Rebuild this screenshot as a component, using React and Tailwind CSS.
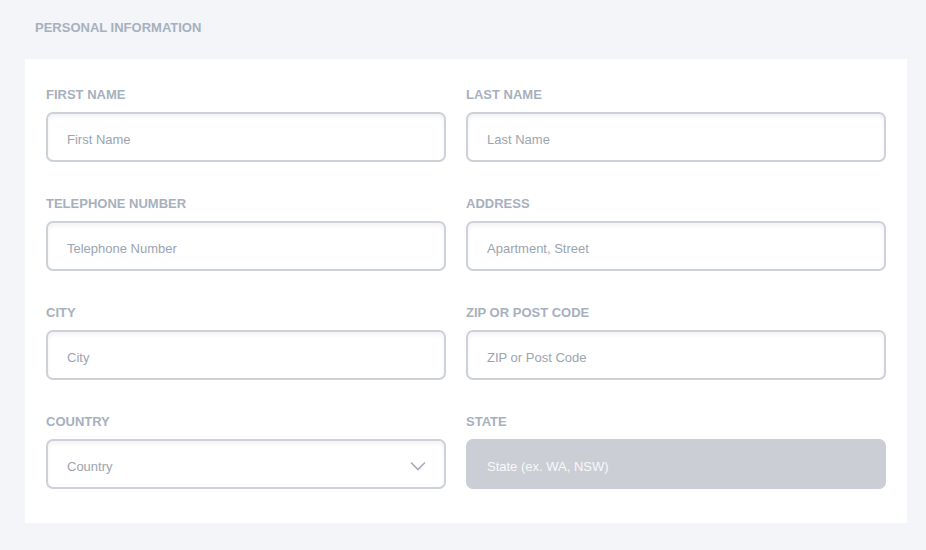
import React from "react";

const fields = [
  { label: "First Name", placeholder: "First Name" },
  { label: "Last Name", placeholder: "Last Name" },
  { label: "Telephone Number", placeholder: "Telephone Number" },
  { label: "Address", placeholder: "Apartment, Street" },
  { label: "City", placeholder: "City" },
  { label: "Zip or Post Code", placeholder: "ZIP or Post Code" },
];

const inputCls =
  "w-full h-[50px] rounded-[7px] border-2 border-[#cdd1d8] bg-white px-[19px] pt-[5px] text-[13px] text-[#4a5568] placeholder:text-[#9ba4b1] shadow-[inset_0_3px_4px_rgba(0,0,0,0.05)] outline-none";

const Label = ({ children }) => (
  <label className="block h-4 mb-[9px] text-[13px] leading-4 font-bold uppercase text-[#a7b0be]">
    {children}
  </label>
);

export default function App() {
  return (
    <div
      className="min-h-[550px] bg-[#f4f5f9] pl-[25px] pr-[19px] pt-[20px] pb-[28px]"
      style={{ fontFamily: '"Liberation Sans", Arial, sans-serif' }}
    >
      <h2 className="pl-[10px] h-4 mb-[23px] text-[13px] leading-4 font-bold uppercase text-[#a7b0be]">
        Personal Information
      </h2>

      <div className="bg-white px-[21px] pt-[28px] pb-[34px]">
        <div className="grid grid-cols-2 gap-y-[34px]">
          {fields.map((f, i) => (
            <div key={f.label} className={i % 2 === 0 ? "pr-5" : ""}>
              <Label>{f.label}</Label>
              <input className={inputCls} placeholder={f.placeholder} />
            </div>
          ))}

          <div className="pr-5">
            <Label>Country</Label>
            <div className="relative">
              <select className={inputCls + " appearance-none text-[#9ba4b1]"} defaultValue="">
                <option value="" disabled>
                  Country
                </option>
              </select>
              <svg
                className="absolute right-[20px] top-[22px] pointer-events-none"
                width="16"
                height="10"
                viewBox="0 0 16 10"
                fill="none"
              >
                <path d="M1 1.5 8 8.5 15 1.5" stroke="#a4adba" strokeWidth="1.6" />
              </svg>
            </div>
          </div>

          <div>
            <Label>State</Label>
            <input
              readOnly
              placeholder="State (ex. WA, NSW)"
              className="w-full h-[50px] rounded-[7px] bg-[#cbced5] px-[21px] pt-[5px] text-[13px] placeholder:text-[#f8f9fa] outline-none"
            />
          </div>
        </div>
      </div>
    </div>
  );
}
